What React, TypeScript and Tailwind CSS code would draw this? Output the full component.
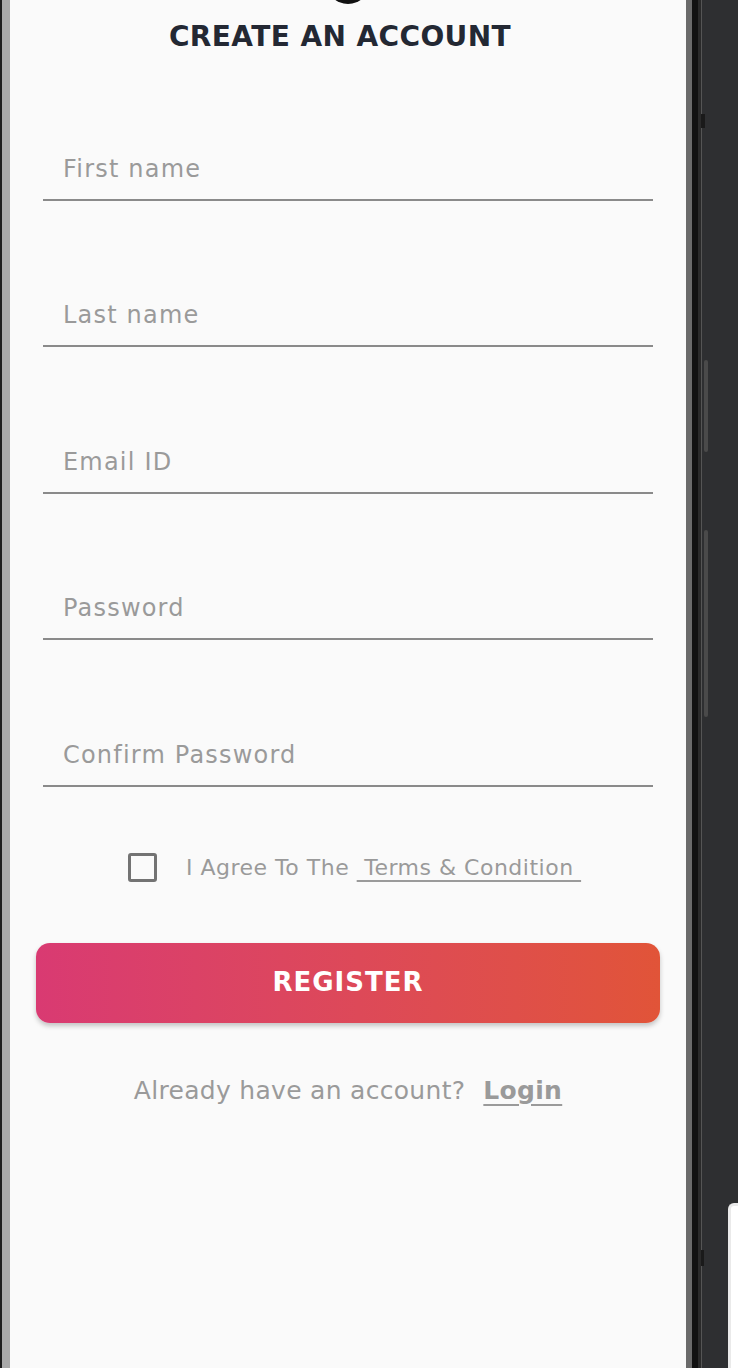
import { useState } from 'react';

const fields = ['First name', 'Last name', 'Email ID', 'Password', 'Confirm Password'];

export default function App() {
  const [agreed, setAgreed] = useState(false);

  return (
    <div className="relative w-[738px] h-[1368px] flex overflow-hidden bg-[#2e2f31] font-['DejaVu_Sans',sans-serif]">
      {/* left bezel */}
      <div className="w-[2px] h-full bg-[#1e1e1e]" />
      <div className="w-[8px] h-full bg-[#a9a9a9]" />

      {/* screen */}
      <div className="relative w-[676px] h-full bg-[#fafafa] overflow-hidden">
        <div className="absolute left-[316px] top-[-40px] w-[44px] h-[44px] rounded-full bg-[#111]" />

        <h1 className="pt-[19px] pr-[16px] h-[54px] text-center text-[28px] leading-[35px] font-bold tracking-[0.4px] text-[#232833]">
          CREATE AN ACCOUNT
        </h1>

        <div className="ml-[33px] w-[610px]">
          {fields.map((f) => (
            <div key={f} className="h-[146.5px] flex flex-col justify-end">
              <div className="pl-[20px] pb-[15px] text-[24px] leading-[30px] tracking-[1.2px] text-[#9a9a9a]">{f}</div>
              <div className="h-[2px] bg-[#8a8a8a]" />
            </div>
          ))}
        </div>

        <div className="mt-[66px] h-[30px] flex items-center pl-[118px]">
          <button
            onClick={() => setAgreed(!agreed)}
            className="w-[29px] h-[29px] rounded-[3px] border-[3px] border-[#737373] bg-transparent"
          >
            {agreed && <span className="block w-full h-full bg-[#737373]" />}
          </button>
          <p className="ml-[29px] text-[22px] leading-[30px] tracking-[0.5px] text-[#9a9a9a] whitespace-pre">
            I Agree To The <span className="underline underline-offset-[5px]"> Terms &amp; Condition </span>
          </p>
        </div>

        <button className="mt-[60px] ml-[26px] w-[624px] h-[80px] rounded-[14px] bg-gradient-to-r from-[#d93a72] to-[#e15438] shadow-[0_3px_5px_rgba(0,0,0,0.22)] text-white text-[26px] font-bold tracking-[1px]">
          REGISTER
        </button>

        <p className="mt-[53px] text-center text-[25px] leading-[30px] tracking-[0.3px] text-[#9a9a9a]">
          Already have an account?
          <span className="ml-[18px] font-bold underline underline-offset-[5px]">Login</span>
        </p>
      </div>

      {/* right bezel */}
      <div className="w-[6px] h-full bg-[#6a6a6a]" />
      <div className="w-[6px] h-full bg-[#111]" />
      <div className="w-[3px] h-full bg-[#2a2a2a]" />
      <div className="w-[1px] h-full bg-[#555]" />
      <div className="flex-1 h-full bg-[#2e2f31]" />

      {/* side buttons */}
      <div className="absolute left-[701px] top-[114px] w-[4px] h-[14px] bg-[#1a1a1a]" />
      <div className="absolute left-[704px] top-[360px] w-[4px] h-[92px] rounded-[2px] bg-[#4a4a4a]" />
      <div className="absolute left-[704px] top-[530px] w-[4px] h-[187px] rounded-[2px] bg-[#4a4a4a]" />
      <div className="absolute left-[701px] top-[1250px] w-[3px] h-[16px] bg-[#1a1a1a]" />

      {/* corner of a card peeking in */}
      <div className="absolute left-[728px] top-[1203px] w-[30px] h-[200px] rounded-tl-[6px] bg-white border-l-[3px] border-t-[3px] border-[#eaeaea]" />
    </div>
  );
}
